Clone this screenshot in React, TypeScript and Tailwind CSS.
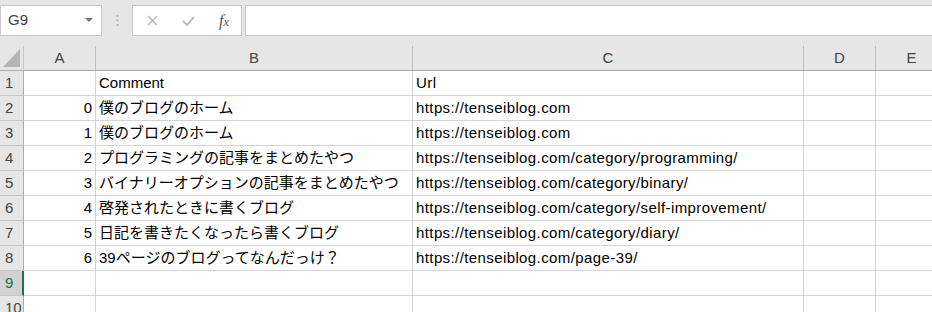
import React from "react";

const FONT = "font-['Liberation_Sans','Noto_Sans_CJK_JP',sans-serif]";

const COLS = ["A", "B", "C", "D", "E"];

const ROWS: [string, string, string][] = [
  ["", "Comment", "Url"],
  ["0", "僕のブログのホーム", "https://tenseiblog.com"],
  ["1", "僕のブログのホーム", "https://tenseiblog.com"],
  ["2", "プログラミングの記事をまとめたやつ", "https://tenseiblog.com/category/programming/"],
  ["3", "バイナリーオプションの記事をまとめたやつ", "https://tenseiblog.com/category/binary/"],
  ["4", "啓発されたときに書くブログ", "https://tenseiblog.com/category/self-improvement/"],
  ["5", "日記を書きたくなったら書くブログ", "https://tenseiblog.com/category/diary/"],
  ["6", "39ページのブログってなんだっけ？", "https://tenseiblog.com/page-39/"],
  ["", "", ""],
  ["", "", ""],
];

function FormulaBar() {
  return (
    <div className="flex h-[46px] items-start bg-[#e6e6e6] pt-[5px]">
      {/* name box */}
      <div className="flex h-[31px] w-[102px] items-center justify-between border border-[#c6c6c6] bg-white pl-[7px] pr-[8px] text-[15px] text-[#444]">
        <span>G9</span>
        <svg width="8" height="5" viewBox="0 0 8 5">
          <path d="M0 0h8L4 4z" fill="#777" />
        </svg>
      </div>
      <div className="flex h-[31px] w-[30px] items-center justify-center">
        <svg width="3" height="11" viewBox="0 0 3 11">
          <rect x="0.5" y="0" width="2" height="2" fill="#b5b5b5" />
          <rect x="0.5" y="4.5" width="2" height="2" fill="#b5b5b5" />
          <rect x="0.5" y="9" width="2" height="2" fill="#b5b5b5" />
        </svg>
      </div>
      {/* cancel / enter / fx */}
      <div className="flex h-[31px] w-[110px] items-center border border-[#c6c6c6] bg-white">
        <div className="flex w-[37px] justify-center pl-[2px]">
          <svg width="11" height="11" viewBox="0 0 11 11">
            <path d="M1 1l9 9M10 1l-9 9" stroke="#b4b4b4" strokeWidth="1.4" />
          </svg>
        </div>
        <div className="flex w-[37px] justify-center">
          <svg width="13" height="10" viewBox="0 0 13 10">
            <path d="M1 5l4 4 7-8" stroke="#b4b4b4" strokeWidth="1.8" fill="none" />
          </svg>
        </div>
        <div className="flex w-[34px] justify-center font-['Liberation_Serif',serif] text-[16px] italic leading-none text-[#555]">
          <span>
            f<span className="text-[12px]">x</span>
          </span>
        </div>
      </div>
      <div className="ml-[3px] h-[31px] flex-1 border border-r-0 border-[#c6c6c6] bg-white" />
    </div>
  );
}

export default function App() {
  return (
    <div className={`h-[312px] w-[932px] overflow-hidden bg-white ${FONT}`}>
      <FormulaBar />
      <div className="grid w-[948px] auto-rows-[25px] grid-cols-[24px_72px_317px_391px_72px_72px] text-[15px]">
        {/* header row */}
        <div className="flex items-end justify-end border-r border-b border-r-[#c6c6c6] border-b-[#ababab] bg-[#e6e6e6] pb-[3px] pr-[3px]">
          <svg width="17" height="18" viewBox="0 0 17 18">
            <path d="M17 0v18H0z" fill="#b4b4b4" />
          </svg>
        </div>
        {COLS.map((c) => (
          <div
            key={c}
            className="flex items-center justify-center border-r border-b border-r-[#c0c0c0] border-b-[#ababab] bg-[#e6e6e6] text-[#444]"
          >
            {c}
          </div>
        ))}

        {ROWS.map((r, i) => {
          const sel = i === 8;
          return (
            <React.Fragment key={i}>
              <div
                className={
                  sel
                    ? "flex items-center border-r-2 border-b border-r-[#217346] border-b-[#c6c6c6] bg-[#d2d2d2] pl-[5px] text-[#217346]"
                    : "flex items-center border-r border-b border-r-[#ababab] border-b-[#c6c6c6] bg-[#e6e6e6] pl-[5px] text-[#444]"
                }
              >
                {i + 1}
              </div>
              <div className="flex items-center justify-end border-r border-b border-[#d4d4d4] pr-[3px] text-black">
                {r[0]}
              </div>
              <div className="flex items-center whitespace-nowrap border-r border-b border-[#d4d4d4] pl-[3px] text-black">
                {r[1]}
              </div>
              <div className="flex items-center whitespace-nowrap border-r border-b border-[#d4d4d4] pl-[3px] tracking-[0.4px] text-black">
                {r[2]}
              </div>
              <div className="border-r border-b border-[#d4d4d4]" />
              <div className="border-r border-b border-[#d4d4d4]" />
            </React.Fragment>
          );
        })}
      </div>
    </div>
  );
}
